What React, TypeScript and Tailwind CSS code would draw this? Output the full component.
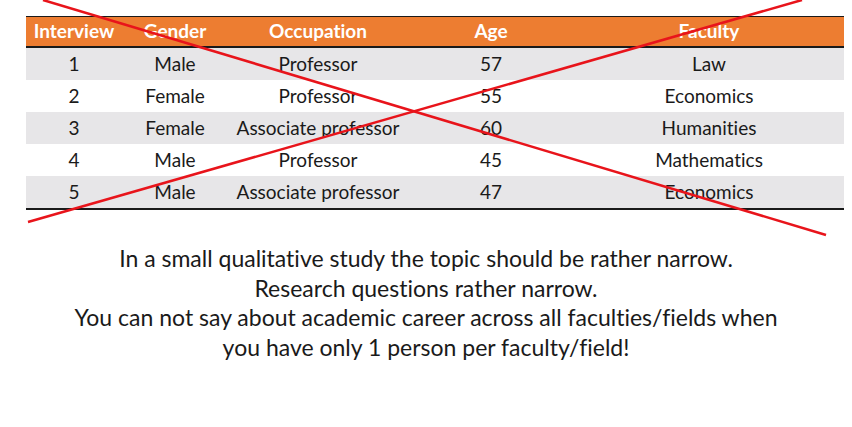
import React from 'react';

const ROWS = [
  ['1', 'Male', 'Professor', '57', 'Law'],
  ['2', 'Female', 'Professor', '55', 'Economics'],
  ['3', 'Female', 'Associate professor', '60', 'Humanities'],
  ['4', 'Male', 'Professor', '45', 'Mathematics'],
  ['5', 'Male', 'Associate professor', '47', 'Economics'],
];

const HEAD = ['Interview', 'Gender', 'Occupation', 'Age', 'Faculty'];
const COLS = 'grid grid-cols-[96px_106px_180px_166px_1fr]';

export default function App() {
  return (
    <div className="relative w-[852px] h-[427px] bg-white overflow-hidden font-['Lato',sans-serif] [font-variant-ligatures:none] text-[#1a1a1a]">
      {/* Table */}
      <div className="pt-[16px] pl-[26px] pr-[8px]">
        <div className="border-t-[1.5px] border-b-2 border-[#1a1a1a]">
          <div className={`${COLS} h-[31px] items-center bg-[#ed7d31] border-b-2 border-[#1a1a1a] text-white font-bold text-[19px]`}>
            {HEAD.map(h => (
              <div key={h} className="text-center">{h}</div>
            ))}
          </div>
          {ROWS.map((r, i) => (
            <div key={r[0]} className={`${COLS} h-[32px] items-center text-[19px] ${i % 2 === 0 ? 'bg-[#e7e6e8]' : 'bg-white'}`}>
              {r.map((c, j) => (
                <div key={j} className="text-center">{c}</div>
              ))}
            </div>
          ))}
        </div>
      </div>

      {/* Note */}
      <div className="mt-[34px] text-center text-[23px] leading-[29.5px] text-[#1a1a1a]">
        <p>In a small qualitative study the topic should be rather narrow.</p>
        <p>Research questions rather narrow.</p>
        <p>You can not say about academic career across all faculties/fields when</p>
        <p>you have only 1 person per faculty/field!</p>
      </div>

      {/* Crossed out */}
      <svg className="absolute inset-0 pointer-events-none" width="852" height="427">
        <line x1="43" y1="0" x2="826" y2="235" stroke="#e8141b" strokeWidth="2.5" />
        <line x1="28" y1="222" x2="802" y2="0" stroke="#e8141b" strokeWidth="2.5" />
      </svg>
    </div>
  );
}
